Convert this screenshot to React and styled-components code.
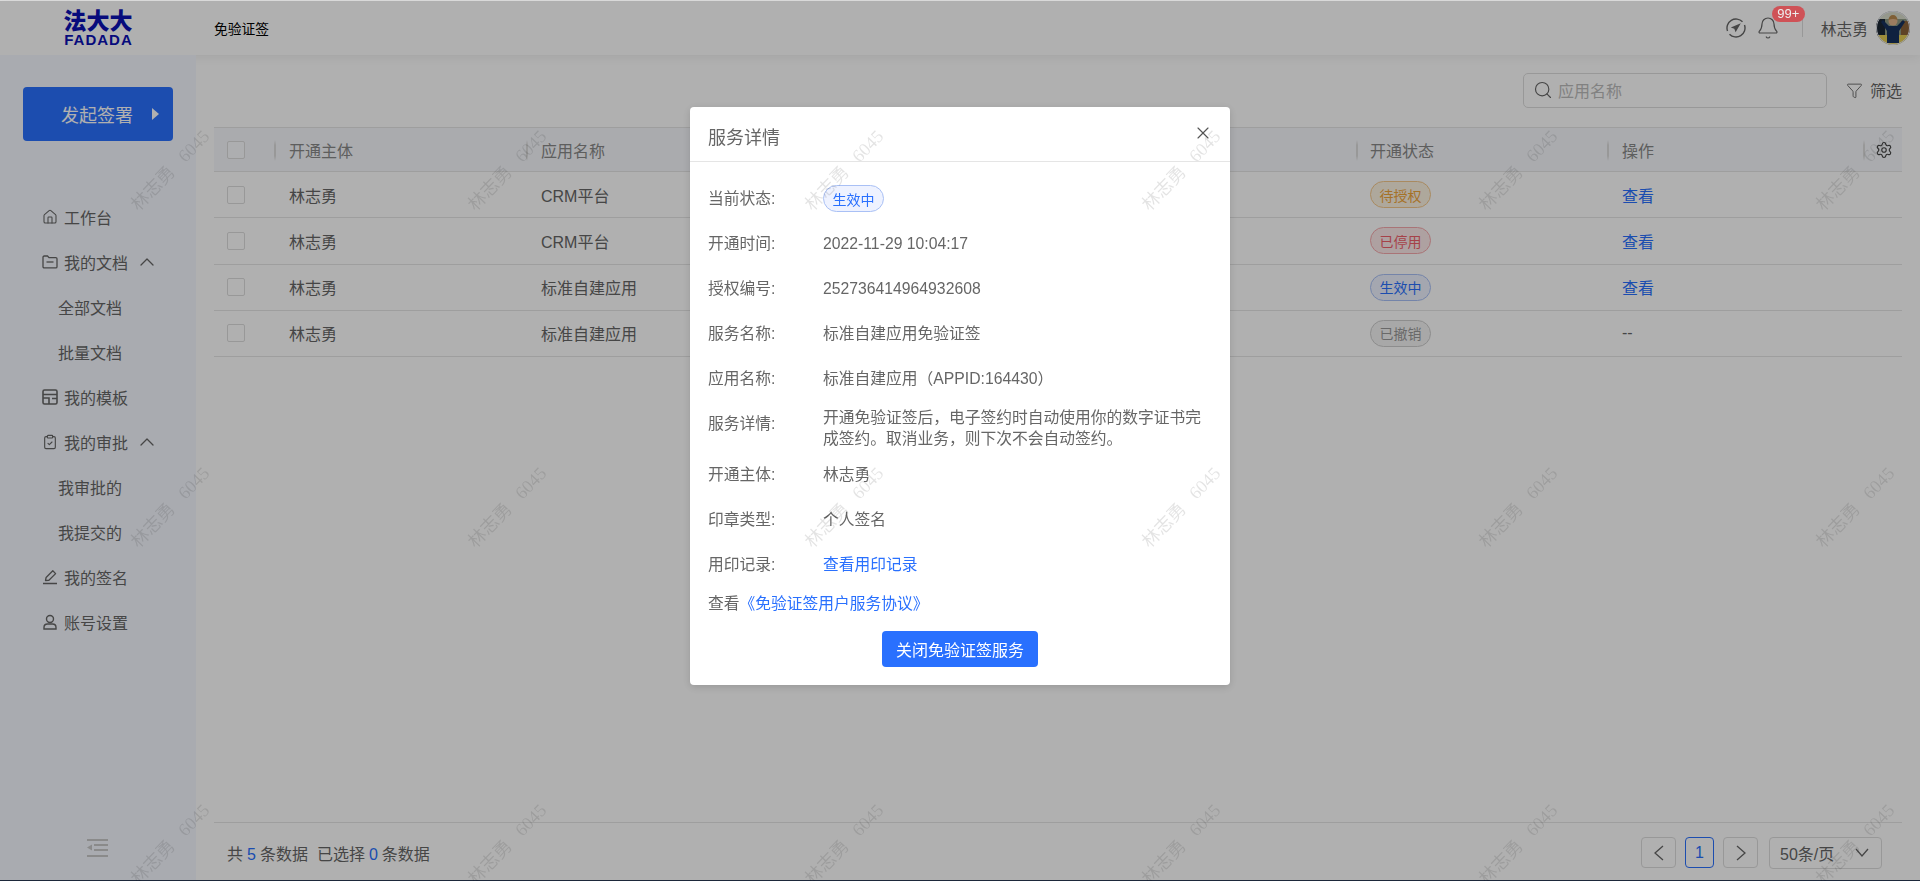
import React from "react";
import styled, { createGlobalStyle } from "styled-components";
import { House, ChevronUp, Bell, Search, Funnel, Settings, X, ClipboardCheck } from "lucide-react";

const Global = createGlobalStyle`
  html, body { margin: 0; padding: 0; height: 100%; overflow: hidden; }
  body {
    background: #fff;
    color: #666;
    font-family: "Liberation Sans", "Noto Sans CJK SC", sans-serif;
    font-size: 16px;
  }
  * { box-sizing: border-box; }
`;

const Page = styled.div`
  height: 881px;
  display: flex;
  flex-direction: column;
  border-top: 1px solid #dedede;
  border-bottom: 1px solid #2a3a55;
`;

const Header = styled.header`
  height: 54px;
  flex: none;
  display: flex;
  align-items: center;
  background: #fff;
  box-shadow: 0 2px 10px rgba(0, 0, 0, 0.07);
`;

const Logo = styled.div`
  width: 68px;
  margin-left: 64px;
  display: flex;
  flex-direction: column;
  align-items: center;
  color: #0b10b4;
  font-weight: 900;
`;

const LogoCn = styled.span`
  font-size: 23px;
  line-height: 22px;
  white-space: nowrap;
`;

const LogoEn = styled.span`
  font-size: 15px;
  line-height: 13px;
  letter-spacing: 1px;
  margin-right: -1px;
  margin-top: 1px;
`;

const HeaderTitle = styled.div`
  margin-left: 82px;
  font-size: 13.75px;
  color: #000;
`;

const HeaderRight = styled.div`
  margin-left: auto;
  display: flex;
  align-items: center;
  padding-right: 10px;
`;

const BellWrap = styled.div`
  position: relative;
  display: flex;
  margin-left: 10px;
  color: #666;
`;

const Badge = styled.span`
  position: absolute;
  left: 16px;
  top: -10px;
  z-index: 20;
  width: 33px;
  height: 16px;
  border-radius: 8px;
  background: #cf5257;
  color: #eee;
  font-size: 13px;
  line-height: 16px;
  text-align: center;
`;

const HeaderSep = styled.span`
  width: 1px;
  height: 17px;
  background: #ddd;
  margin-left: 22px;
`;

const UserName = styled.span`
  margin-left: 18px;
  font-size: 15.75px;
  color: #666;
`;

const Body = styled.div`
  flex: 1;
  display: flex;
  min-height: 0;
`;

const Sidebar = styled.aside`
  width: 196px;
  flex: none;
  background: #f5f8ff;
  display: flex;
  flex-direction: column;
  padding: 32px 0 23px 0;
`;

const StartButton = styled.div`
  width: 150px;
  height: 54px;
  margin-left: 23px;
  border-radius: 4px;
  background: #2970fe;
  color: #fff;
  font-size: 18px;
  display: flex;
  align-items: center;
  padding-left: 38px;
`;

const Triangle = styled.span`
  width: 0;
  height: 0;
  margin-left: 19px;
  border-left: 7px solid #fff;
  border-top: 6px solid transparent;
  border-bottom: 6px solid transparent;
`;

const Menu = styled.nav`
  margin-top: 53px;
  display: flex;
  flex-direction: column;
`;

const MenuItem = styled.div`
  height: 45px;
  display: flex;
  align-items: center;
  padding-left: ${(p) => (p.$sub ? "58px" : "42px")};
  color: #666;
  svg { flex: none; }
`;

const MenuText = styled.span`
  margin-left: ${(p) => (p.$sub ? "0" : "6px")};
`;

const MenuArrow = styled.span`
  display: flex;
  margin-left: 7px;
`;

const Collapse = styled.div`
  margin-top: auto;
  margin-left: 87px;
  display: flex;
  color: #c8c8c8;
`;

const Main = styled.main`
  flex: 1;
  min-width: 0;
  display: flex;
  flex-direction: column;
  padding: 17px 18px 0;
`;

const Toolbar = styled.div`
  height: 36px;
  flex: none;
  display: flex;
  justify-content: flex-end;
  align-items: center;
`;

const SearchBox = styled.div`
  width: 304px;
  height: 35px;
  border: 1px solid #ddd;
  border-radius: 5px;
  display: flex;
  align-items: center;
  padding-left: 9px;
  color: #666;
`;

const Placeholder = styled.span`
  margin-left: 5px;
  color: #bbb;
`;

const FilterBtn = styled.div`
  display: flex;
  align-items: center;
  margin-left: 19px;
  color: #666;
  span { margin-left: 7px; }
`;

const Table = styled.div`
  margin-top: 19px;
  flex: 1;
  display: flex;
  flex-direction: column;
`;

const Row = styled.div`
  display: grid;
  grid-template-columns: 60px 252px 830px 251px 295px;
  height: ${(p) => (p.$head ? "45px" : "46.25px")};
  align-items: center;
  border-bottom: 1px solid #e5e5e5;
  background: ${(p) => (p.$head ? "#f6f8fc" : "transparent")};
  border-top: ${(p) => (p.$head ? "1px solid #e5e5e5" : "none")};
  color: ${(p) => (p.$head ? "#888" : "#666")};
`;

const Cell = styled.div`
  height: 100%;
  display: flex;
  align-items: center;
  position: relative;
  padding-left: ${(p) => p.$pad || "15px"};
`;

const HeadSep = styled.span`
  position: absolute;
  left: ${(p) => p.$left || "0"};
  top: 12px;
  width: 2px;
  height: 21px;
  background: linear-gradient(to bottom, transparent, #dcdcdc 25%, #dcdcdc 75%, transparent);
`;

const GearIcon = styled(Settings)`
  position: absolute;
  right: 9px;
  color: #444;
`;

const Check = styled.span`
  width: 18px;
  height: 18px;
  margin-left: 13px;
  border: 1px solid #ddd;
  border-radius: 2px;
  background: ${(p) => (p.$head ? "#fbfcff" : "#fff")};
`;

const TAG_COLORS = {
  wait: ["#f0a63a", "#fdf3e3", "#f5c98c"],
  stop: ["#f0606a", "#fdeaea", "#f5a9ad"],
  live: ["#2970fe", "#eef2ff", "#a9c0f5"],
  gone: ["#999", "#f4f4f4", "#ccc"],
};

const Tag = styled.span`
  width: 61px;
  height: 27px;
  border-radius: 13.5px;
  border: 1px solid ${(p) => TAG_COLORS[p.$kind][2]};
  background: ${(p) => TAG_COLORS[p.$kind][1]};
  color: ${(p) => TAG_COLORS[p.$kind][0]};
  font-size: 14px;
  display: inline-flex;
  align-items: center;
  justify-content: center;
`;

const Link = styled.a`
  color: #2970fe;
`;

const Spacer = styled.div`
  flex: 1;
`;

const Footer = styled.div`
  height: 58px;
  flex: none;
  border-top: 1px solid #e5e5e5;
  display: flex;
  align-items: center;
  padding: 2px 20px 0 13px;
  color: #666;
`;

const FootNum = styled.span`
  color: #2970fe;
  margin: 0 4px;
`;

const FootGroup = styled.span`
  margin-right: 9px;
`;

const Pager = styled.div`
  margin-left: auto;
  display: flex;
  align-items: center;
`;

const PageBtn = styled.div`
  width: ${(p) => (p.$current ? "29px" : "35px")};
  height: 31px;
  margin-left: 9px;
  border: 1px solid ${(p) => (p.$current ? "#2970fe" : "#ddd")};
  border-radius: 4px;
  color: ${(p) => (p.$current ? "#2970fe" : "#666")};
  display: flex;
  align-items: center;
  justify-content: center;
`;

const PageSelect = styled.div`
  width: 113px;
  height: 32px;
  margin-left: 11px;
  border: 1px solid #ddd;
  border-radius: 4px;
  display: flex;
  align-items: center;
  justify-content: space-between;
  padding: 0 12px 0 10px;
  color: #666;
`;

const Overlay = styled.div`
  position: fixed;
  inset: 1px 0 0 0;
  z-index: 10;
  background: rgba(0, 0, 0, 0.31);
  display: flex;
  justify-content: center;
  align-items: flex-start;
  padding-top: 106px;
`;

const Modal = styled.div`
  width: 540px;
  height: 578px;
  background: #fff;
  border-radius: 4px;
  box-shadow: 0 2px 8px rgba(0, 0, 0, 0.15);
  display: flex;
  flex-direction: column;
  position: relative;
  font-size: 15.75px;
`;

const ModalHead = styled.div`
  height: 55px;
  flex: none;
  border-bottom: 1px solid #e5e5e5;
  display: flex;
  align-items: center;
  padding: 3px 18px 0;
  font-size: 18px;
  color: #666;
`;

const CloseBtn = styled.span`
  position: absolute;
  right: 17px;
  top: 16px;
  display: flex;
  color: #555;
`;

const ModalBody = styled.div`
  padding: 14px 18px 0;
  display: flex;
  flex-direction: column;
`;

const Info = styled.div`
  display: flex;
  align-items: center;
  min-height: ${(p) => (p.$tall ? "51px" : "45px")};
`;

const Label = styled.span`
  width: 115px;
  flex: none;
  line-height: 21px;
  color: #666;
  margin-bottom: ${(p) => (p.$up ? "7px" : "0")};
`;

const Value = styled.span`
  color: #666;
  line-height: 21px;
  padding-top: ${(p) => (p.$low ? "3px" : "0")};
`;

const Agreement = styled.div`
  margin-top: 6px;
  height: 22px;
  line-height: 22px;
  color: #666;
`;

const ModalFoot = styled.div`
  display: flex;
  justify-content: center;
  margin-top: 16px;
`;

const CloseServiceBtn = styled.div`
  width: 156px;
  height: 36px;
  border-radius: 4px;
  background: #2970fe;
  color: #fff;
  font-size: 16px;
  display: flex;
  align-items: center;
  justify-content: center;
`;

const Watermarks = styled.div`
  position: fixed;
  inset: 0;
  z-index: 11;
  pointer-events: none;
  overflow: hidden;
  display: grid;
  grid-template-columns: repeat(6, 337px);
  grid-auto-rows: 337px;
`;

const Mark = styled.div`
  display: flex;
  align-items: center;
  justify-content: center;
  color: rgba(0, 0, 0, 0.11);
  font-family: "Liberation Serif", "Noto Sans CJK SC", serif;
  font-size: 18px;
  white-space: pre;
  span { transform: rotate(-46deg); display: block; }
`;

function FolderIcon() {
  return (
    <svg width="16" height="16" viewBox="0 0 16 16" fill="none" stroke="currentColor" strokeWidth="1.3">
      <path d="M1 3.2c0-.7.5-1.2 1.2-1.2h3.3l1.5 1.6h6.800c.7 0 1.200.5 1.200 1.200v7.900c0 .7-.5 1.200-1.200 1.200H2.200c-.7 0-1.200-.5-1.200-1.200z" />
      <path d="M4.500 8h7" />
    </svg>
  );
}

function TemplateIcon() {
  return (
    <svg width="16" height="16" viewBox="0 0 16 16" fill="none" stroke="currentColor" strokeWidth="1.6">
      <rect x="1" y="1" width="14" height="14" rx="1.5" />
      <path d="M1 5.500h14M1 9h6v6M10 9.500h5" />
    </svg>
  );
}

function SignIcon() {
  return (
    <svg width="16" height="16" viewBox="0 0 16 16" fill="none" stroke="currentColor" strokeWidth="1.3">
      <path d="M3.500 11.500l.6-3L10.800 1.800l2.800 2.800-6.700 6.700z" strokeLinejoin="round" />
      <path d="M1 14.500h14" strokeWidth="1.5" />
    </svg>
  );
}

function UserIcon() {
  return (
    <svg width="16" height="16" viewBox="0 0 16 16" fill="none" stroke="currentColor" strokeWidth="1.4">
      <circle cx="8" cy="5" r="3.500" />
      <path d="M2 15v-1.500c0-2 1.500-3.500 3.500-3.500h5c2 0 3.500 1.500 3.500 3.500V15z" />
    </svg>
  );
}

function CollapseIcon() {
  return (
    <svg width="21" height="18" viewBox="0 0 21 18" fill="currentColor">
      <rect x="0" y="0" width="21" height="2" />
      <rect x="7" y="5" width="14" height="2" />
      <rect x="7" y="10" width="14" height="2" />
      <rect x="0" y="16" width="21" height="2" />
      <path d="M5 5.500v6L0 8.500z" />
    </svg>
  );
}

function CompassIcon() {
  return (
    <svg width="20" height="20" viewBox="0 0 20 20" fill="none" stroke="currentColor" strokeWidth="1.4">
      <path d="M16.500 3.800A9 9 0 0 0 1.500 13M3.500 16.200A9 9 0 0 0 18.500 7" />
      <path d="M14.800 5.200l-10 4.300 3.500 1.200 1.300 3.500z" fill="currentColor" stroke="none" />
    </svg>
  );
}

function Arrow({ points, width = 12, height = 16 }) {
  return (
    <svg width={width} height={height} viewBox={`0 0 ${width} ${height}`} fill="none" stroke="currentColor" strokeWidth="1.3">
      <polyline points={points} />
    </svg>
  );
}

function Avatar() {
  return (
    <svg width="34" height="34" viewBox="0 0 34 34" style={{ marginLeft: 8 }}>
      <defs>
        <clipPath id="avatarClip">
          <circle cx="17" cy="17" r="17" />
        </clipPath>
      </defs>
      <g clipPath="url(#avatarClip)">
        <rect width="34" height="34" fill="#8d9a84" />
        <rect y="0" width="34" height="8" fill="#d8dccb" />
        <rect x="0" y="8" width="9" height="18" fill="#1b2733" />
        <rect x="25" y="10" width="9" height="18" fill="#8a6238" />
        <rect y="24" width="34" height="10" fill="#e4cc55" />
        <path d="M7 9l6 6h8l6-6 2 2-6 9v12H11V20L5 11z" fill="#16305c" />
        <circle cx="17" cy="10" r="4.500" fill="#e2b48c" />
        <path d="M12.500 9c0-3 2-5 4.500-5s4.500 2 4.500 5c-3-1.500-6-1.500-9 0z" fill="#b98a4e" />
      </g>
      <circle cx="17" cy="17" r="16.500" fill="none" stroke="#e6e6f0" />
    </svg>
  );
}

const ROWS = [
  { name: "CRM平台", kind: "wait", status: "待授权", link: true },
  { name: "CRM平台", kind: "stop", status: "已停用", link: true },
  { name: "标准自建应用", kind: "live", status: "生效中", link: true },
  { name: "标准自建应用", kind: "gone", status: "已撤销", link: false },
];

const DETAILS = [
  ["开通时间:", "2022-11-29 10:04:17"],
  ["授权编号:", "252736414964932608"],
  ["服务名称:", "标准自建应用免验证签"],
  ["应用名称:", "标准自建应用（APPID:164430）"],
];

export default function App() {
  return (
    <>
      <Global />
      <Page>
        <Header>
          <Logo>
            <LogoCn>法大大</LogoCn>
            <LogoEn>FADADA</LogoEn>
          </Logo>
          <HeaderTitle>免验证签</HeaderTitle>
          <HeaderRight>
            <CompassIcon />
            <BellWrap>
              <Bell size={24} strokeWidth={1.2} />
              <Badge>99+</Badge>
            </BellWrap>
            <HeaderSep />
            <UserName>林志勇</UserName>
            <Avatar />
          </HeaderRight>
        </Header>
        <Body>
          <Sidebar>
            <StartButton>
              发起签署
              <Triangle />
            </StartButton>
            <Menu>
              <MenuItem><House size={16} strokeWidth={1.6} /><MenuText>工作台</MenuText></MenuItem>
              <MenuItem>
                <FolderIcon /><MenuText>我的文档</MenuText>
                <MenuArrow><ChevronUp size={24} strokeWidth={1.3} /></MenuArrow>
              </MenuItem>
              <MenuItem $sub><MenuText $sub>全部文档</MenuText></MenuItem>
              <MenuItem $sub><MenuText $sub>批量文档</MenuText></MenuItem>
              <MenuItem><TemplateIcon /><MenuText>我的模板</MenuText></MenuItem>
              <MenuItem>
                <ClipboardCheck size={16} strokeWidth={1.7} /><MenuText>我的审批</MenuText>
                <MenuArrow><ChevronUp size={24} strokeWidth={1.3} /></MenuArrow>
              </MenuItem>
              <MenuItem $sub><MenuText $sub>我审批的</MenuText></MenuItem>
              <MenuItem $sub><MenuText $sub>我提交的</MenuText></MenuItem>
              <MenuItem><SignIcon /><MenuText>我的签名</MenuText></MenuItem>
              <MenuItem><UserIcon /><MenuText>账号设置</MenuText></MenuItem>
            </Menu>
            <Collapse><CollapseIcon /></Collapse>
          </Sidebar>
          <Main>
            <Toolbar>
              <SearchBox>
                <Search size={20} strokeWidth={1.4} />
                <Placeholder>应用名称</Placeholder>
              </SearchBox>
              <FilterBtn>
                <Funnel size={17} strokeWidth={1.3} />
                <span>筛选</span>
              </FilterBtn>
            </Toolbar>
            <Table>
              <Row $head>
                <Cell $pad="0"><Check $head /></Cell>
                <Cell><HeadSep />开通主体</Cell>
                <Cell $pad="15px"><HeadSep />应用名称</Cell>
                <Cell $pad="14px"><HeadSep />开通状态</Cell>
                <Cell>
                  <HeadSep />操作
                  <HeadSep $left="256px" />
                  <GearIcon size={18} strokeWidth={1.5} />
                </Cell>
              </Row>
              {ROWS.map((row, i) => (
                <Row key={i}>
                  <Cell $pad="0"><Check /></Cell>
                  <Cell>林志勇</Cell>
                  <Cell>{row.name}</Cell>
                  <Cell $pad="14px"><Tag $kind={row.kind}>{row.status}</Tag></Cell>
                  <Cell>{row.link ? <Link>查看</Link> : "--"}</Cell>
                </Row>
              ))}
              <Spacer />
              <Footer>
                <FootGroup>共<FootNum>5</FootNum>条数据</FootGroup>
                <span>已选择<FootNum>0</FootNum>条数据</span>
                <Pager>
                  <PageBtn><Arrow points="10,1 2,8 10,15" /></PageBtn>
                  <PageBtn $current>1</PageBtn>
                  <PageBtn><Arrow points="2,1 10,8 2,15" /></PageBtn>
                  <PageSelect>50条/页<Arrow points="1,1 7,8 13,1" width={14} height={10} /></PageSelect>
                </Pager>
              </Footer>
            </Table>
          </Main>
        </Body>
      </Page>
      <Overlay>
        <Modal>
          <ModalHead>服务详情</ModalHead>
          <CloseBtn><X size={20} strokeWidth={1.4} /></CloseBtn>
          <ModalBody>
            <Info>
              <Label>当前状态:</Label>
              <Tag $kind="live">生效中</Tag>
            </Info>
            {DETAILS.map(([label, value]) => (
              <Info key={label}>
                <Label>{label}</Label>
                <Value>{value}</Value>
              </Info>
            ))}
            <Info $tall>
              <Label $up>服务详情:</Label>
              <Value $low>开通免验证签后，电子签约时自动使用你的数字证书完成签约。取消业务，则下次不会自动签约。</Value>
            </Info>
            <Info><Label>开通主体:</Label><Value>林志勇</Value></Info>
            <Info><Label>印章类型:</Label><Value>个人签名</Value></Info>
            <Info><Label>用印记录:</Label><Value><Link>查看用印记录</Link></Value></Info>
            <Agreement>查看<Link>《免验证签用户服务协议》</Link></Agreement>
            <ModalFoot><CloseServiceBtn>关闭免验证签服务</CloseServiceBtn></ModalFoot>
          </ModalBody>
        </Modal>
      </Overlay>
      <Watermarks>
        {Array.from({ length: 18 }, (_, i) => (
          <Mark key={i}><span>林志勇   6045</span></Mark>
        ))}
      </Watermarks>
    </>
  );
}
